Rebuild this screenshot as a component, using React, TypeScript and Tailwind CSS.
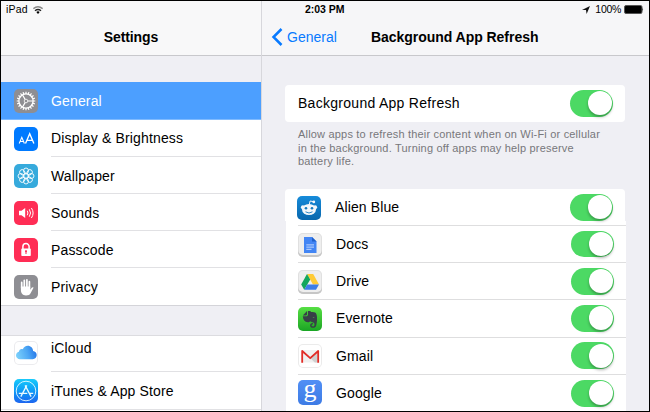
import type { ReactNode } from "react";

function Tile({ className, children }: { className: string; children: ReactNode }) {
  return (
    <div className={`size-6 shrink-0 overflow-hidden rounded-[5px] ${className}`}>
      <svg viewBox="0 0 24 24" className="block size-full">{children}</svg>
    </div>
  );
}

const teeth = Array.from({ length: 20 }, (_, i) => i * 18);
const petals = Array.from({ length: 8 }, (_, i) => i * 45);

const GearIcon = () => (
  <Tile className="bg-[#8e8e93]">
    <g fill="none" stroke="#fff">
      <circle cx="12" cy="12" r="7.1" strokeWidth="1.3" />
      {teeth.map((a) => (
        <path key={a} d="M12 2.7v2.2" strokeWidth="1.2" transform={`rotate(${a} 12 12)`} />
      ))}
      <circle cx="12" cy="12" r="1.8" strokeWidth=".8" />
      <path d="M13.8 12H19M11.1 10.4 8.5 5.9M11.1 13.6l-2.6 4.5" strokeWidth="1.1" />
    </g>
  </Tile>
);

const DisplayIcon = () => (
  <Tile className="bg-[#007aff]">
    <g fill="none" stroke="#fff">
      <path d="m5.2 16.5 2.6-6.2 2.6 6.2M6.1 14.5h3.4" strokeWidth="1.1" />
      <path d="m11.5 16.6 4.2-9.8 4.2 9.8M13 13.4h5.4" strokeWidth="1.35" />
    </g>
  </Tile>
);

const WallpaperIcon = () => (
  <Tile className="bg-[#36aadc]">
    <g fill="none" stroke="#fff" strokeWidth=".9">
      <circle cx="12" cy="12" r="2.2" />
      {petals.map((a) => (
        <ellipse key={a} cx="12" cy="6.8" rx="2.5" ry="2.8" transform={`rotate(${a} 12 12)`} />
      ))}
    </g>
  </Tile>
);

const SoundsIcon = () => (
  <Tile className="bg-[#ff2d55]">
    <path d="M5 9.7h2.5L11.2 7v10l-3.7-2.7H5z" fill="#fff" />
    <g fill="none" stroke="#fff" strokeWidth="1">
      <path d="M13.2 9.7q1.5 2.3 0 4.6M15.3 8.3q2.5 3.7 0 7.4M17.4 7q3.4 5 0 10" />
    </g>
  </Tile>
);

const PasscodeIcon = () => (
  <Tile className="bg-[#ff2d55]">
    <path d="M8.9 11V8.6a3.1 3.1 0 0 1 6.2 0V11" fill="none" stroke="#fff" strokeWidth="1.5" />
    <rect x="7.3" y="10.6" width="9.5" height="7.5" rx=".8" fill="#fff" />
    <path d="M12 12.5v3.5" stroke="#ff2d55" strokeWidth="1" />
    <circle cx="12" cy="13.2" r="1" fill="#ff2d55" />
  </Tile>
);

const PrivacyIcon = () => (
  <Tile className="bg-[#8e8e93]">
    <path d="M7.7 13V7.4M10.3 12V5.3M12.9 12V4.8M15.4 13V6.7" strokeWidth="1.7" stroke="#fff" strokeLinecap="round" fill="none" />
    <path d="M6.9 11.5h9.3v3.2l1.5-2c.7-.9 2.2-.7 1.7.4l-2.7 4.8c-1 1.8-2.2 2.5-4.7 2.5-3.6 0-5.1-2.4-5.1-5.4z" fill="#fff" />
  </Tile>
);

const CloudIcon = () => (
  <Tile className="bg-white inset-shadow-[0_0_0_1px_#ebebee]">
    <defs>
      <linearGradient id="cloud" x1="0" y1=".6" x2="1" y2=".4">
        <stop stopColor="#7bd0fb" /><stop offset=".55" stopColor="#4da7f4" /><stop offset="1" stopColor="#2475e8" />
      </linearGradient>
    </defs>
    <path d="M6 18.2c-2.3 0-4-1.7-4-3.7 0-1.9 1.2-3.3 2.9-3.7.1-2 2.2-3.4 3.9-2.5 1-2.2 2.7-3.5 4.9-3.5 3.1 0 5.3 2.3 5.4 5.2 2.1.3 3.6 2 3.6 4.1 0 2.3-1.7 4.1-4 4.1z" fill="url(#cloud)" />
  </Tile>
);

const StoreIcon = () => (
  <Tile className="bg-linear-to-b from-[#1bcbfb] to-[#1d65ef]">
    <g fill="none" stroke="#e9faff">
      <circle cx="12" cy="12" r="9.8" strokeWidth=".9" />
      <path d="m6.8 17.6 6-11.2M11.1 6.4l6 11.2M4.8 14.3h8.5M15.6 14.3h3.6" strokeWidth="1.3" />
    </g>
  </Tile>
);

const AlienIcon = () => (
  <Tile className="bg-linear-to-b from-[#168bda] to-[#0867ad]">
    <path d="m12.2 9 .9-4 3.5.7" fill="none" stroke="#f3f7fa" strokeWidth="1" />
    <g fill="#f3f7fa">
      <circle cx="16.8" cy="5.9" r="1.4" />
      <circle cx="5.9" cy="11.3" r="2" /><circle cx="18.1" cy="11.3" r="2" />
      <ellipse cx="12" cy="13.5" rx="7" ry="5.5" />
    </g>
    <g fill="#167bbd"><circle cx="9" cy="12.3" r="1.3" /><circle cx="15" cy="12.3" r="1.3" /></g>
    <path d="M8.5 15.8q3.5 2.4 7 0" fill="none" stroke="#167bbd" strokeWidth=".9" />
  </Tile>
);

const DocsIcon = () => (
  <Tile className="bg-[#eeeeee] shadow-[inset_0_-2px_0_#c6c6c6,inset_0_0_0_1px_#e0e0e0]">
    <path d="M6 4h8l4.5 4.5V20H6z" fill="#4285f4" />
    <path d="M14 4v4.5h4.5z" fill="#1f60cb" />
    <path d="M8.3 11.9H16M8.3 14.1H16M8.3 16.3h5.2" stroke="#c3d8fe" strokeWidth="1" />
  </Tile>
);

const DriveIcon = () => (
  <Tile className="bg-[#eeeeee] shadow-[inset_0_-2px_0_#c6c6c6,inset_0_0_0_1px_#e0e0e0]">
    <path d="M9 4h6.2l5.8 10.6h-6z" fill="#ffcb36" />
    <path d="m9 4 3.2 5.6-6 10.2-3-5.2z" fill="#12a65c" />
    <path d="M9.2 14.6H21l-3 5.2H6.2z" fill="#3d7de7" />
  </Tile>
);

const EvernoteIcon = () => (
  <Tile className="bg-linear-to-b from-[#55df43] to-[#18a524]">
    <g fill="#374047">
      <path d="M9 4.1v3.2c0 .7-.4 1.1-1.1 1.1H4.8z" />
      <path d="M9.8 4.2c1.7-.5 3.1 0 3.5.9 1.7 0 3.9.1 4.7 1.2 1.6 2.8 1.2 8.8.1 12.5-.5 1.4-1.5 2-3 2-1.8 0-3-.9-3-2.4 0-1.6 1.1-2.5 2.8-2.4v1.2c-.8.1-1.3.5-1.3 1.1 0 .8.7 1.2 1.6 1.1 1-.1 1.3-.8 1.3-2.2 0-1.2-.6-1.8-2.2-2-1.2-.1-1.8-.3-2.1-1.2-.4 1-1.3 1.3-2.4 1.2-3.2-.3-4.7-2.3-5-6h3.3c1.2 0 1.8-.7 1.8-1.8z" />
    </g>
    <path d="M14.5 10.2q1.6-.5 2 .7z" fill="#5bb851" />
  </Tile>
);

const GmailIcon = () => (
  <Tile className="bg-white inset-shadow-[0_0_0_1px_#ebebeb]">
    <path d="M3.5 6h17.3v12.6H3.5z" fill="#f0f0f0" />
    <path d="m12.2 14 7.6-7v11.6h-3z" fill="#cfcfcf" />
    <path d="M4.2 18.7V7l8 7.2 8-7.2v11.7" fill="none" stroke="#e22c26" strokeWidth="1.8" strokeLinejoin="round" />
  </Tile>
);

const GoogleIcon = () => (
  <div className="-mt-0.5 h-[25px] w-6 shrink-0 rounded-[5px] bg-linear-to-b from-[#518ff5] to-[#3d7be5] text-center font-['Liberation_Serif',serif] text-[26px] leading-[18px] text-white">
    g
  </div>
);

const Toggle = () => (
  <div className="flex h-[26.5px] w-[43.5px] shrink-0 justify-end rounded-full bg-[#4cd964] p-[1.2px]">
    <div className="size-6 rounded-full bg-white shadow-[0_2px_3px_rgba(0,0,0,0.3)]" />
  </div>
);

const settings = [
  { name: "Display & Brightness", icon: <DisplayIcon /> },
  { name: "Wallpaper", icon: <WallpaperIcon /> },
  { name: "Sounds", icon: <SoundsIcon /> },
  { name: "Passcode", icon: <PasscodeIcon /> },
  { name: "Privacy", icon: <PrivacyIcon /> },
];

const apps = [
  { name: "Docs", icon: <DocsIcon /> },
  { name: "Drive", icon: <DriveIcon /> },
  { name: "Evernote", icon: <EvernoteIcon /> },
  { name: "Gmail", icon: <GmailIcon /> },
  { name: "Google", icon: <GoogleIcon /> },
];

function Sidebar() {
  return (
    <aside className="flex w-[260px] shrink-0 flex-col bg-[#efeff4]">
      <header className="h-[55px] shrink-0 border-b border-[#c8c8cc] bg-[#f8f8f9]">
        <div className="flex h-[17px] items-center gap-[5px] pl-[5px] text-[10.5px]">
          <span>iPad</span>
          <svg width="10" height="8" viewBox="0 0 10 8" fill="none" stroke="#222" strokeWidth="1.4">
            <path d="M.4 2.7q4.6-3.8 9.2 0" stroke="#888" /><path d="M2 4.7q3-2.5 6 0" /><path d="M3.3 5.9 5 7.9l1.7-2Q5 4.7 3.3 5.9z" fill="#000" stroke="none" />
          </svg>
        </div>
        <h1 className="pt-[9px] text-center text-[14px] leading-5 font-bold tracking-[-0.1px]">Settings</h1>
      </header>
      <div className="mt-[26px] flex h-[38px] shrink-0 items-center gap-[13px] border-b border-[#80bbff] bg-[#4c9fff] pl-[13px] text-white">
        <GearIcon /><span className="pt-px">General</span>
      </div>
      <div className="border-b border-[#d4d4d9] bg-white">
        {settings.map((s, i) => (
          <div key={s.name} className="flex h-[37px] items-center gap-[13px] pl-[13px]">
            {s.icon}
            <div className={`flex h-full flex-1 items-center ${i === 0 ? "pt-px" : i < 4 ? "pt-[2px]" : "pt-px"} ${i < 4 ? "border-b border-[#e1e1e4]" : ""}`}>{s.name}</div>
          </div>
        ))}
      </div>
      <div className="mt-[29px] flex-1 border-t border-[#dcdce0] bg-white">
        <div className="flex h-9 gap-[13px] pl-[13px] pt-[5px]">
          <CloudIcon />
          <div className="-mt-[3.5px] flex-1 border-b border-[#e1e1e4]">iCloud</div>
        </div>
        <div className="flex h-[38px] items-center gap-[13px] border-b border-[#e1e1e4] pl-[13px]">
          <StoreIcon /><span className="pt-px">iTunes &amp; App Store</span>
        </div>
      </div>
    </aside>
  );
}

function Details() {
  return (
    <main className="flex min-w-0 flex-1 flex-col border-l border-[#d7d7dc] bg-[#efeff4] tracking-normal">
      <header className="h-[55px] shrink-0 border-b border-[#c8c8cc] bg-[#f6f6f8]">
        <div className="flex h-[17px] items-center pl-[43px] pr-[5px] text-[10.5px]">
          <span className="font-bold tracking-[-0.05px]">2:03 PM</span>
          <svg className="ml-auto mr-[5px]" width="8" height="8" viewBox="0 0 8 8"><path d="M8 0 4.6 8 4 4H0z" fill="#111" /></svg>
          <span className="mr-[3px] tracking-[-0.3px]">100%</span>
          <svg width="20" height="9" viewBox="0 0 20 9"><rect x=".5" y=".5" width="17.5" height="8" rx="1.5" fill="#000" stroke="#555" /><path d="M18.5 3q1.3 1.5 0 3z" fill="#000" /></svg>
        </div>
        <div className="flex pl-[9px] pt-[9px] leading-5">
          <svg width="12" height="20" viewBox="0 0 12 20"><path d="M10.5 2 2.5 10l8 8" fill="none" stroke="#087aff" strokeWidth="2.5" /></svg>
          <span className="ml-1 w-[84px] text-[#087aff]">General</span>
          <h2 className="text-[14px] font-bold tracking-[-0.04px]">Background App Refresh</h2>
        </div>
      </header>
      <section className="ml-[23px] mr-[24px] mt-[29px] flex h-[37px] shrink-0 items-center justify-between rounded-[4px] bg-white pl-[13px] pr-3">
        <span className="tracking-[0.28px]">Background App Refresh</span><Toggle />
      </section>
      <p className="ml-9 mt-[6px] h-[61px] shrink-0 text-[11px] leading-[13.5px] tracking-[0.19px] text-[#77777b]">
        Allow apps to refresh their content when on Wi-Fi or cellular<br />in the background. Turning off apps may help preserve<br />battery life.
      </p>
      <section className="flex-1 tracking-[0.12px]">
        <div className="ml-[23px] mr-[24px] flex h-8 items-center rounded-t-[4px] bg-white pl-3 pr-3 pt-[5px]">
          <AlienIcon /><span className="ml-[14px] flex-1">Alien Blue</span><Toggle />
        </div>
        <div className="ml-6 mr-[23px] bg-white">
          <div className="ml-3 h-[5px] border-b border-[#dededf]" />
          {apps.map((a, i) => (
            <div key={a.name} className="flex h-[37.2px] items-center pl-3">
              {a.icon}
              <div className={`-ml-6 flex h-full flex-1 items-center justify-between pl-[38px] pr-3 ${i < 4 ? "border-b border-[#dededf]" : ""}`}><span className="pt-px">{a.name}</span><Toggle /></div>
            </div>
          ))}
        </div>
      </section>
    </main>
  );
}

export default function App() {
  return (
    <div className="flex h-[412px] w-[650px] overflow-hidden border border-black bg-[#efeff4] font-['Liberation_Sans',Arial,sans-serif] text-[14px] tracking-[0.15px] text-black">
      <Sidebar /><Details />
    </div>
  );
}
